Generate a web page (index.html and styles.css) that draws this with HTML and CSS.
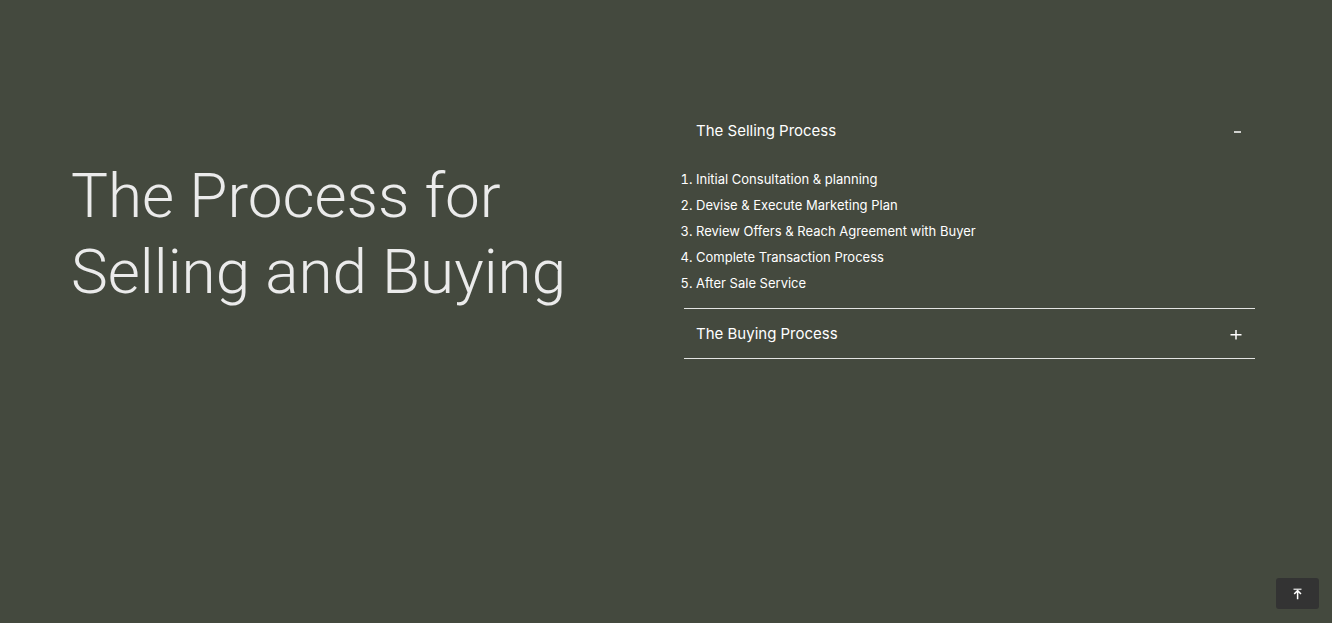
FILE: index.html
```html
<!DOCTYPE html>
<html lang="en">
<head>
<meta charset="utf-8">
<meta name="viewport" content="width=device-width, initial-scale=1">
<title>The Process for Selling and Buying</title>
<link rel="stylesheet" href="styles.css">
</head>
<body>
<main class="process">
  <h1 class="title">The Process for Selling and Buying</h1>
  <div class="accordion">
    <section class="item item-open">
      <h2 class="item-heading">
        <button class="item-toggle" type="button" aria-expanded="true" aria-controls="selling">
          <span>The Selling Process</span>
          <svg class="sign" viewBox="0 0 12 12" aria-hidden="true"><path d="M4 7H11"/></svg>
        </button>
      </h2>
      <ol class="steps" id="selling">
        <li>Initial Consultation &amp; planning</li>
        <li>Devise &amp; Execute Marketing Plan</li>
        <li>Review Offers &amp; Reach Agreement with Buyer</li>
        <li>Complete Transaction Process</li>
        <li>After Sale Service</li>
      </ol>
    </section>
    <section class="item">
      <h2 class="item-heading">
        <button class="item-toggle" type="button" aria-expanded="false">
          <span>The Buying Process</span>
          <svg class="sign" viewBox="0 0 12 12" aria-hidden="true"><path d="M.5 6.7H11.5M6 2V11.5"/></svg>
        </button>
      </h2>
    </section>
  </div>
</main>
<button class="to-top" type="button" aria-label="Back to top">
  <svg class="to-top-icon" viewBox="0 0 12 12" aria-hidden="true"><path d="M1.5 1.3H9.5" opacity=".75"/><path d="M5.6 11.3V2.5M2.2 6L5.6 2.6L9 6"/></svg>
</button>
</body>
</html>
```
FILE: styles.css
```css
* {
  box-sizing: border-box;
}

body {
  margin: 0;
  min-height: 100vh;
  background: #44493e;
  color: #fff;
  font-family: Inter, "Liberation Sans", sans-serif;
}

.process {
  display: grid;
  grid-template-columns: 1fr 1fr;
  gap: 40px;
  padding: 106px 77px 80px 71px;
}

.title {
  margin: 52px 0 0;
  color: #ebebeb;
  font-family: Roboto, Inter, sans-serif;
  font-size: 62px;
  font-weight: 300;
  line-height: 76px;
}

.accordion {
  padding-left: 1px;
}

.item {
  border-bottom: 1px solid #e3e4e2;
}

.item-heading {
  margin: 0;
  font-size: 15px;
  font-weight: 400;
}

.item-toggle {
  display: flex;
  align-items: center;
  justify-content: space-between;
  width: 100%;
  height: 49px;
  padding: 0 13px 0 12px;
  border: 0;
  background: none;
  color: inherit;
  font: inherit;
  cursor: pointer;
}

.sign {
  width: 12px;
  height: 12px;
  fill: none;
  stroke: currentColor;
  stroke-width: 1.5;
}

.steps {
  margin: 0;
  padding: 11px 0 12px 12px;
  font-size: 13px;
  line-height: 26px;
}

.to-top {
  position: fixed;
  right: 13px;
  bottom: 14px;
  display: flex;
  align-items: center;
  justify-content: center;
  width: 43px;
  height: 31px;
  padding: 0;
  border: 0;
  border-radius: 3px;
  background: #333;
  color: #fff;
  cursor: pointer;
}

.to-top-icon {
  width: 12px;
  height: 12px;
  fill: none;
  stroke: currentColor;
  stroke-width: 1.5;
}
```
